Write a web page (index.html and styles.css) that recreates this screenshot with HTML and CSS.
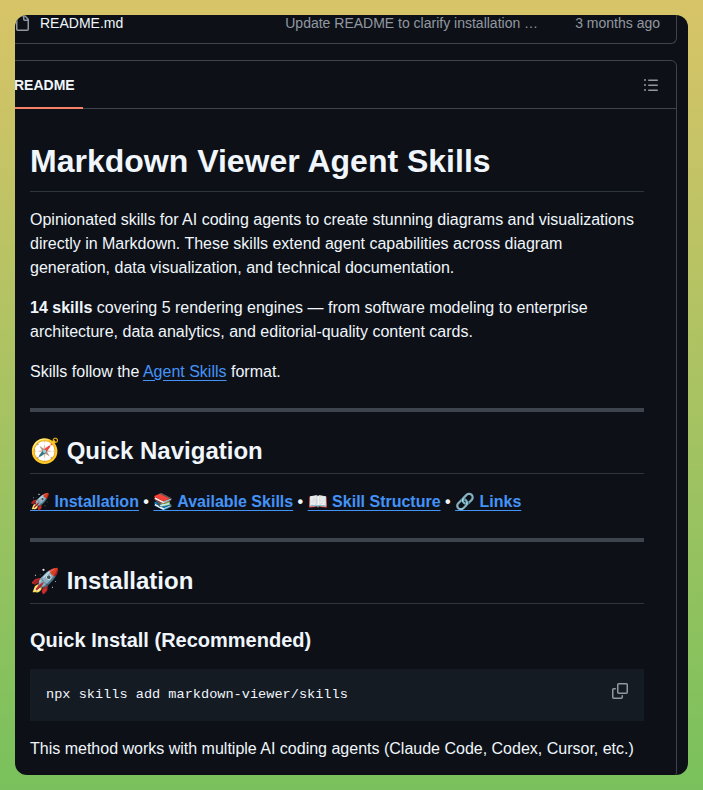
FILE: index.html
```html
<!DOCTYPE html>
<html lang="en">
<head>
<meta charset="utf-8">
<title>Markdown Viewer Agent Skills</title>
<link rel="stylesheet" href="styles.css">
</head>
<body>
<main class="window">
  <section class="files">
    <div class="file-row">
      <svg class="file-icon" width="16" height="16" viewBox="0 0 16 16"><path d="M2 1.75C2 .784 2.784 0 3.75 0h6.586c.464 0 .909.184 1.237.513l2.914 2.914c.329.328.513.773.513 1.237v9.586A1.75 1.75 0 0 1 13.25 16h-9.5A1.75 1.75 0 0 1 2 14.25Zm1.75-.25a.25.25 0 0 0-.25.25v12.5c0 .138.112.25.25.25h9.5a.25.25 0 0 0 .25-.25V6h-2.75A1.75 1.75 0 0 1 9 4.25V1.5Zm6.75.062V4.25c0 .138.112.25.25.25h2.688l-.011-.013-2.914-2.914-.013-.011Z"/></svg>
      <span class="file-name">README.md</span>
      <span class="commit">Update README to clarify installation …</span>
      <span class="age">3 months ago</span>
    </div>
  </section>
  <section class="readme">
    <header class="readme-head">
      <span class="tab">README</span>
      <svg class="toc" width="16" height="16" viewBox="0 0 16 16"><path d="M5.75 2.5h8.5a.75.75 0 0 1 0 1.5h-8.5a.75.75 0 0 1 0-1.5Zm0 5h8.5a.75.75 0 0 1 0 1.5h-8.5a.75.75 0 0 1 0-1.5Zm0 5h8.5a.75.75 0 0 1 0 1.5h-8.5a.75.75 0 0 1 0-1.5ZM2 14a1 1 0 1 1 0-2 1 1 0 0 1 0 2Zm1-6a1 1 0 1 1-2 0 1 1 0 0 1 2 0ZM2 4a1 1 0 1 1 0-2 1 1 0 0 1 0 2Z"/></svg>
    </header>
    <article class="markdown">
      <h1>Markdown Viewer Agent Skills</h1>
      <p>Opinionated skills for AI coding agents to create stunning diagrams and visualizations directly in Markdown. These skills extend agent capabilities across diagram generation, data visualization, and technical documentation.</p>
      <p><strong>14 skills</strong> covering 5 rendering engines — from software modeling to enterprise architecture, data analytics, and editorial-quality content cards.</p>
      <p>Skills follow the <a href="#">Agent Skills</a> format.</p>
      <hr>
      <h2>🧭 Quick Navigation</h2>
      <p><strong><a href="#">🚀 Installation</a> • <a href="#">📚 Available Skills</a> • <a href="#">📖 Skill Structure</a> • <a href="#">🔗 Links</a></strong></p>
      <hr>
      <h2>🚀 Installation</h2>
      <h3>Quick Install (Recommended)</h3>
      <div class="code">
        <pre>npx skills add markdown-viewer/skills</pre>
        <svg class="copy" width="16" height="16" viewBox="0 0 16 16"><path d="M0 6.75C0 5.784.784 5 1.75 5h1.5a.75.75 0 0 1 0 1.5h-1.5a.25.25 0 0 0-.25.25v7.5c0 .138.112.25.25.25h7.5a.25.25 0 0 0 .25-.25v-1.5a.75.75 0 0 1 1.5 0v1.5A1.75 1.75 0 0 1 9.25 16h-7.5A1.75 1.75 0 0 1 0 14.25Z"/><path d="M5 1.75C5 .784 5.784 0 6.75 0h7.5C15.216 0 16 .784 16 1.75v7.5A1.75 1.75 0 0 1 14.25 11h-7.5A1.75 1.75 0 0 1 5 9.25Zm1.75-.25a.25.25 0 0 0-.25.25v7.5c0 .138.112.25.25.25h7.5a.25.25 0 0 0 .25-.25v-7.5a.25.25 0 0 0-.25-.25Z"/></svg>
      </div>
      <p>This method works with multiple AI coding agents (Claude Code, Codex, Cursor, etc.)</p>
    </article>
  </section>
</main>
</body>
</html>
```
FILE: styles.css
```css
* { box-sizing: border-box; }
html, body { margin: 0; height: 790px; overflow: hidden; }
body {
  padding: 15px;
  background: linear-gradient(180deg, #d8c468 0%, #79c15c 100%);
  font-family: "Liberation Sans", Arial, sans-serif;
  font-size: 16px;
  line-height: 24px;
  color: #f0f6fc;
}
.window {
  width: 673px;
  height: 760px;
  background: #0d1117;
  border-radius: 12px;
  overflow: hidden;
}
.files, .readme {
  margin-left: -18px;
  width: 680px;
  border: 1px solid #3d444d;
}
.files {
  border-top: 0;
  border-radius: 0 0 6px 6px;
  height: 29px;
}
.file-row {
  height: 16px;
  display: flex;
  align-items: center;
  font-size: 14px;
  line-height: 16px;
  padding-left: 16px;
  padding-right: 16px;
}
.file-icon { fill: #9198a1; flex: none; }
.file-name { margin-left: 10px; color: #f0f6fc; }
.commit { margin-left: 162px; color: #9198a1; flex: 1; white-space: nowrap; }
.age { color: #9198a1; white-space: nowrap; }
.readme {
  margin-top: 16px;
  border-radius: 6px;
}
.readme-head {
  height: 48px;
  display: flex;
  align-items: center;
  justify-content: space-between;
  border-bottom: 1px solid #3d444d;
  padding-right: 17px;
}
.tab {
  margin-left: 8px;
  height: 48px;
  padding: 2px 8px 0;
  display: flex;
  align-items: center;
  font-size: 14px;
  font-weight: 700;
  border-bottom: 2px solid #f78166;
  align-self: flex-start;
}
.toc { fill: #9198a1; }
.markdown { padding: 32px 32px 0; }
h1, h2, h3 { margin: 0; font-weight: 700; }
h1 {
  font-size: 32px;
  line-height: 40px;
  padding-bottom: 9.6px;
  border-bottom: 1px solid #3d444db3;
  margin-bottom: 16px;
}
h2 {
  font-size: 24px;
  line-height: 30px;
  padding-bottom: 7.2px;
  border-bottom: 1px solid #3d444db3;
  margin-top: 24px;
  margin-bottom: 16px;
}
h3 {
  font-size: 20px;
  line-height: 25px;
  margin-top: 24px;
  margin-bottom: 16px;
}
p { margin: 0 0 16px; }
a { color: #4493f8; text-decoration: underline; text-underline-offset: 3.2px; }
hr {
  height: 4px;
  margin: 24px 0;
  border: 0;
  background: #3d444d;
}
.code {
  position: relative;
  background: #151b23;
  margin-bottom: 16px;
}
pre {
  margin: 0;
  padding: 16px;
  font-family: "Liberation Mono", "Courier New", monospace;
  font-size: 13.6px;
  line-height: 20px;
  color: #f0f6fc;
}
.copy { position: absolute; top: 14px; right: 16px; fill: #9198a1; }
```
